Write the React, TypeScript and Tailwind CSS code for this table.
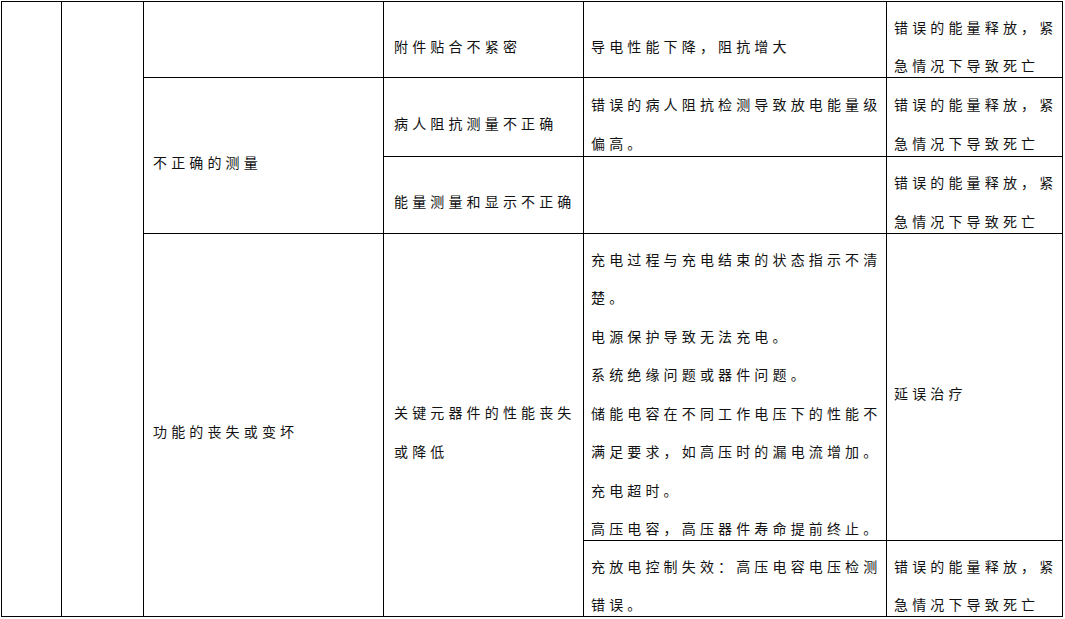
import React from 'react';

type CellProps = {
  className?: string;
  lines?: string[];
  pad?: string;
};

// 单元格：文字逐行写出，行距与原文档一致
const Cell: React.FC<CellProps> = ({ className = '', lines = [], pad = 'pl-[7px]' }) => (
  <div className={`bg-white flex flex-col justify-center pt-[13px] ${pad} ${className}`}>
    {lines.map((line, i) => (
      <div key={i} className="whitespace-nowrap leading-[38.5px]">
        {line}
      </div>
    ))}
  </div>
);

const danger = ['错误的能量释放，紧', '急情况下导致死亡'];

const App: React.FC = () => {
  return (
    <div className="min-h-screen bg-white">
      <div
        className="ml-[1px] mt-[1px] inline-grid grid-cols-[59px_81px_239px_199px_302px_175px] grid-rows-[75px_78px_76px_306px_75px] gap-px bg-black p-px text-[14px] tracking-[4.15px] text-[#111]"
        style={{ fontFamily: '"Noto Sans CJK SC", "Noto Sans", sans-serif' }}
      >
        {/* 前两列为空的合并列 */}
        <div className="col-start-1 row-start-1 row-span-5 bg-white" />
        <div className="col-start-2 row-start-1 row-span-5 bg-white" />

        {/* 第三列 */}
        <div className="col-start-3 row-start-1 bg-white" />
        <Cell className="col-start-3 row-start-2 row-span-2" pad="pl-[9px]" lines={['不正确的测量']} />
        <Cell className="col-start-3 row-start-4 row-span-2" pad="pl-[9px]" lines={['功能的丧失或变坏']} />

        {/* 第四列 */}
        <Cell className="col-start-4 row-start-1" pad="pl-[10px]" lines={['附件贴合不紧密']} />
        <Cell className="col-start-4 row-start-2" pad="pl-[10px]" lines={['病人阻抗测量不正确']} />
        <Cell className="col-start-4 row-start-3" pad="pl-[10px]" lines={['能量测量和显示不正确']} />
        <Cell
          className="col-start-4 row-start-4 row-span-2"
          pad="pl-[10px]"
          lines={['关键元器件的性能丧失', '或降低']}
        />

        {/* 第五列 */}
        <Cell className="col-start-5 row-start-1" lines={['导电性能下降，阻抗增大']} />
        <Cell className="col-start-5 row-start-2" lines={['错误的病人阻抗检测导致放电能量级', '偏高。']} />
        <div className="col-start-5 row-start-3 bg-white" />
        <Cell
          className="col-start-5 row-start-4"
          lines={[
            '充电过程与充电结束的状态指示不清',
            '楚。',
            '电源保护导致无法充电。',
            '系统绝缘问题或器件问题。',
            '储能电容在不同工作电压下的性能不',
            '满足要求，如高压时的漏电流增加。',
            '充电超时。',
            '高压电容，高压器件寿命提前终止。',
          ]}
        />
        <Cell className="col-start-5 row-start-5" lines={['充放电控制失效：高压电容电压检测', '错误。']} />

        {/* 第六列 */}
        <Cell className="col-start-6 row-start-1" lines={danger} />
        <Cell className="col-start-6 row-start-2" lines={danger} />
        <Cell className="col-start-6 row-start-3" lines={danger} />
        <Cell className="col-start-6 row-start-4" lines={['延误治疗']} />
        <Cell className="col-start-6 row-start-5" lines={danger} />
      </div>
    </div>
  );
};

export default App;
